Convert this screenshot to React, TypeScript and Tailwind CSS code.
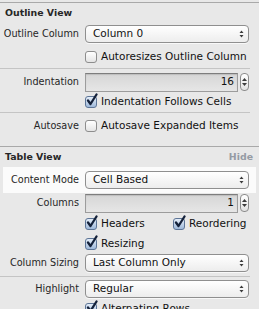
import React from "react";

const font = { fontFamily: '"DejaVu Sans", "Liberation Sans", sans-serif' };

function Arrows() {
  return (
    <svg width="5" height="8" viewBox="0 0 5 8" className="shrink-0">
      <path d="M2.5 0.5 L4.5 3 L0.5 3 Z" fill="#3a3a3a" />
      <path d="M2.5 7.5 L4.5 5 L0.5 5 Z" fill="#3a3a3a" />
    </svg>
  );
}

function Popup({ value }: { value: string }) {
  return (
    <div className="flex h-[18px] w-[164px] items-center justify-between rounded-[4px] border border-[#8f8f8f] bg-gradient-to-b from-white to-[#ededed] pl-[7px] pr-[4px] text-[10.5px] text-[#111] shadow-[0_1px_0_rgba(255,255,255,0.7)]">
      <span>{value}</span>
      <Arrows />
    </div>
  );
}

function Stepper() {
  return (
    <div className="flex h-[18px] w-[9px] flex-col items-center justify-center gap-[2px] rounded-[4px] border border-[#8c8c8c] bg-gradient-to-b from-white to-[#e2e2e2]">
      <svg width="5" height="3" viewBox="0 0 5 3">
        <path d="M2.5 0 L5 3 L0 3 Z" fill="#3a3a3a" />
      </svg>
      <svg width="5" height="3" viewBox="0 0 5 3">
        <path d="M2.5 3 L5 0 L0 0 Z" fill="#3a3a3a" />
      </svg>
    </div>
  );
}

function NumberField({ value }: { value: string }) {
  return (
    <div className="flex w-[164px] items-center gap-[2px]">
      <div className="flex h-[19px] w-[153px] items-center justify-end border border-[#9c9c9c] border-t-[#7d7d7d] bg-gradient-to-b from-[#d6d6d6] to-[#e6e6e6] pr-[3px] text-[10.5px] text-[#111] shadow-[inset_0_1px_1px_rgba(0,0,0,0.12)]">
        {value}
      </div>
      <Stepper />
    </div>
  );
}

function Check({ checked, label }: { checked?: boolean; label: string }) {
  return (
    <div className="flex items-center gap-[4px] text-[10.5px] text-[#111]">
      <div className="relative h-[12px] w-[12px] shrink-0">
        <div
          className={
            checked
              ? "h-[12px] w-[12px] rounded-[3px] border border-[#5d7597] bg-gradient-to-b from-[#e4edf8] to-[#9fb9da]"
              : "h-[12px] w-[12px] rounded-[3px] border border-[#8d8d8d] bg-gradient-to-b from-white to-[#e4e4e4]"
          }
        />
        {checked && (
          <svg width="14" height="14" viewBox="0 0 14 14" className="absolute left-[0px] top-[-3px]">
            <path d="M3 7.5 L5.5 11 L11.5 1.5" fill="none" stroke="#14213a" strokeWidth="2.3" strokeLinejoin="round" strokeLinecap="round" />
          </svg>
        )}
      </div>
      <span>{label}</span>
    </div>
  );
}

function Row({ label, h, children, className = "" }: { label?: string; h: string; children?: React.ReactNode; className?: string }) {
  return (
    <div className={`grid grid-cols-[79px_164px] items-center gap-x-[6px] ${h} ${className}`}>
      <div className="whitespace-nowrap text-right text-[9.7px] text-[#262626]">{label}</div>
      <div>{children}</div>
    </div>
  );
}

function Sep() {
  return <div className="h-px w-[250px] bg-[#c4c4c4]" />;
}

export default function App() {
  return (
    <div className="relative h-[309px] w-[259px] overflow-hidden bg-[#e8e8e8]" style={font}>
      <div className="h-[2px]" />
      <div className="h-px w-full bg-[#a9a9a9]" />
      <div className="flex h-[20px] items-center pl-[5px] text-[9.4px] font-bold text-[#262626]">Outline View</div>
      <Row label="Outline Column" h="h-[22px]">
        <Popup value="Column 0" />
      </Row>
      <Row h="h-[23px]">
        <Check label="Autoresizes Outline Column" />
      </Row>
      <Sep />
      <div className="h-[2px]" />
      <Row label="Indentation" h="h-[22px]">
        <NumberField value="16" />
      </Row>
      <Row h="h-[18px]">
        <Check checked label="Indentation Follows Cells" />
      </Row>
      <div className="h-px" />
      <Sep />
      <Row label="Autosave" h="h-[26px]">
        <Check label="Autosave Expanded Items" />
      </Row>
      <div className="h-[7px]" />
      <div className="h-px w-full bg-[#a9a9a9]" />
      <div className="flex h-[20px] items-center justify-between pl-[5px] pr-[6px] text-[9.4px] font-bold">
        <span className="text-[#262626]">Table View</span>
        <span className="text-[#959ba4]">Hide</span>
      </div>
      <div className="mx-[3px] bg-[#fbfbfb]">
        <Row label="Content Mode" h="h-[26px]" className="-ml-[3px]">
          <Popup value="Cell Based" />
        </Row>
      </div>
      <Row label="Columns" h="h-[20px]">
        <NumberField value="1" />
      </Row>
      <Row h="h-[22px]">
        <div className="flex gap-[16px]">
          <div className="w-[72px]">
            <Check checked label="Headers" />
          </div>
          <Check checked label="Reordering" />
        </div>
      </Row>
      <Row h="h-[17px]">
        <Check checked label="Resizing" />
      </Row>
      <Row label="Column Sizing" h="h-[22px]">
        <Popup value="Last Column Only" />
      </Row>
      <div className="h-[2px]" />
      <Sep />
      <Row label="Highlight" h="h-[24px]">
        <Popup value="Regular" />
      </Row>
      <Row h="h-[12px]">
        <Check checked label="Alternating Rows" />
      </Row>
    </div>
  );
}
